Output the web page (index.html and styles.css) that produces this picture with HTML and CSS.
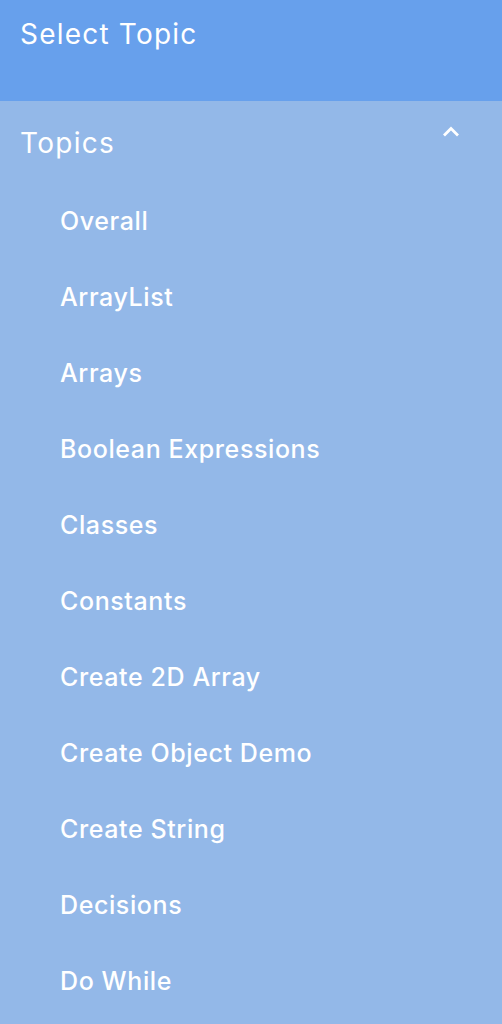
FILE: index.html
```html
<!DOCTYPE html>
<html>
<head>
<meta charset="utf-8">
<link rel="stylesheet" href="styles.css">
</head>
<body>
<div class="page">
  <header class="top">
    <div class="title">Select Topic</div>
  </header>
  <section class="panel">
    <div class="group-head">
      <span class="group-title">Topics</span>
      <svg class="chev" width="18" height="12" viewBox="0 0 18 12"><path d="M2 10.5 L9 3.5 L16 10.5" fill="none" stroke="#fff" stroke-width="2.8"/></svg>
    </div>
    <ul class="list">
      <li>Overall</li>
      <li>ArrayList</li>
      <li>Arrays</li>
      <li>Boolean Expressions</li>
      <li>Classes</li>
      <li>Constants</li>
      <li>Create 2D Array</li>
      <li>Create Object Demo</li>
      <li>Create String</li>
      <li>Decisions</li>
      <li>Do While</li>
    </ul>
  </section>
</div>
</body>
</html>
```

FILE: styles.css
```css
html, body {
  margin: 0;
  padding: 0;
}
body {
  font-family: Inter, "Open Sans", sans-serif;
  color: #fff;
  background: #93b8e8;
  overflow: hidden;
}
.page {
  width: 502px;
  height: 1024px;
  background: #93b8e8;
}
.top {
  height: 101px;
  background: #67a0ec;
  padding: 14px 20px 0;
  box-sizing: border-box;
}
.title {
  font-size: 28px;
  line-height: 40px;
  font-weight: 400;
  letter-spacing: 1.2px;
}
.group-head {
  height: 82px;
  display: flex;
  align-items: center;
  justify-content: space-between;
  padding: 0 42px 0 20px;
  box-sizing: border-box;
}
.group-title {
  font-size: 28px;
  line-height: 40px;
  letter-spacing: 1.3px;
  margin-top: 1px;
}
.chev {
  margin-top: -22px;
}
.list {
  list-style: none;
  margin: 0;
  padding: 0;
}
.list li {
  height: 76px;
  display: flex;
  align-items: center;
  padding-left: 60px;
  box-sizing: border-box;
  font-size: 25px;
  font-weight: 500;
  letter-spacing: 0.6px;
}
```
